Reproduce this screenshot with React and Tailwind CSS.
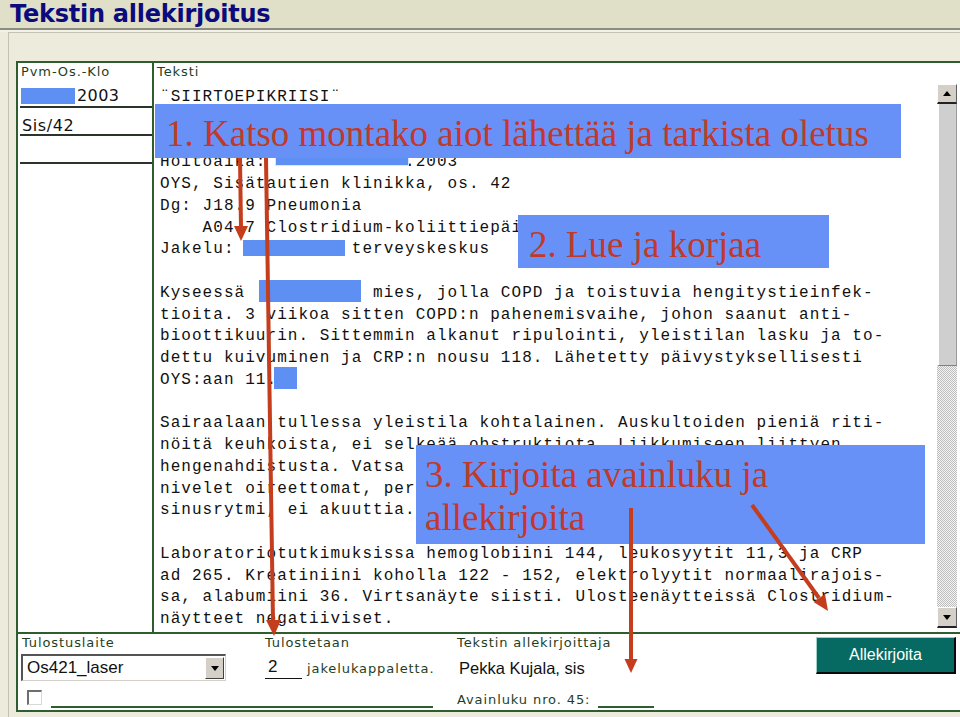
import React from "react";

const LINES = [
  "¨SIIRTOEPIKRIISI¨",
  "",
  "",
  "Hoitoaika:             .2003",
  "OYS, Sisätautien klinikka, os. 42",
  "Dg: J18.9 Pneumonia",
  "    A04.7 Clostridium-koliittiepäily",
  "Jakelu:           terveyskeskus",
  "",
  "Kyseessä '          mies, jolla COPD ja toistuvia hengitystieinfek-",
  "tioita. 3 viikoa sitten COPD:n pahenemisvaihe, johon saanut anti-",
  "bioottikuurin. Sittemmin alkanut ripulointi, yleistilan lasku ja to-",
  "dettu kuivuminen ja CRP:n nousu 118. Lähetetty päivystyksellisesti",
  "OYS:aan 11.",
  "",
  "Sairaalaan tullessa yleistila kohtalainen. Auskultoiden pieniä riti-",
  "nöitä keuhkoista, ei selkeää obstruktiota. Liikkumiseen liittyen",
  "hengenahdistusta. Vatsa pehmeä ja aristamaton.",
  "nivelet oireettomat, perifeeriset pulssit tuntuvat.",
  "sinusrytmi, ei akuuttia.",
  "",
  "Laboratoriotutkimuksissa hemoglobiini 144, leukosyytit 11,3 ja CRP",
  "ad 265. Kreatiniini koholla 122 - 152, elektrolyytit normaalirajois-",
  "sa, alabumiini 36. Virtsanäyte siisti. Ulosteenäytteissä Clostridium-",
  "näytteet negatiiviset.",
];

const BOXES = {
  3: "left-[115px] top-[-1px] w-[134px] h-[15px] border border-[#dce6fb]",
  7: "left-[83px] top-[1px] w-[102px] h-[16px]",
  9: "left-[99px] top-[-3px] w-[102px] h-[22px]",
  13: "left-[114px] top-[-3px] w-[23px] h-[22px]",
};

const label =
  "font-['DejaVu_Sans',sans-serif] text-[13px] tracking-[0.9px] text-[#1e3f1e] leading-[18px]";

function Tri({ up }) {
  return (
    <svg width="8" height="5" viewBox="0 0 8 5">
      <polygon points={up ? "0,5 8,5 4,0" : "0,0 8,0 4,5"} fill="#000" />
    </svg>
  );
}

function Scrollbar() {
  return (
    <div className="w-[20px] h-[544px] flex flex-col mr-[3px]">
      <div className="h-[20px] bg-[#d4d0c8] border-t border-l border-t-white border-l-white border-b-2 border-r border-b-[#222] border-r-[#606060] flex items-center justify-center">
        <Tri up />
      </div>
      <div className="h-[262px] bg-[#cfcfcf] border-l-2 border-l-white border-r border-r-[#9a9a9a] border-b border-b-[#808080]" />
      <div className="flex-1 bg-[repeating-conic-gradient(#bdbdbd_0_25%,#f4f4f4_0_50%)] bg-[length:2px_2px]" />
      <div className="h-[21px] bg-[#d4d0c8] border-t border-l border-t-white border-l-white border-b-2 border-r border-b-[#222] border-r-[#606060] flex items-center justify-center">
        <Tri />
      </div>
    </div>
  );
}

export default function App() {
  return (
    <div className="relative w-[960px] h-[717px] overflow-hidden bg-[#ecebdc]">
      {/* header */}
      <div className="h-[28px] bg-[#e0dfc8] pl-[10px]">
        <span className="font-['DejaVu_Sans',sans-serif] font-bold text-[24px] tracking-[-0.25px] leading-[28px] text-[#0b0b7c] whitespace-nowrap">
          Tekstin allekirjoitus
        </span>
      </div>
      <div className="h-[2px] bg-[#8e8e80]" />
      <div className="h-[2px] bg-[#f3f2e8]" />

      {/* panel */}
      <div className="ml-[8px] border-l border-t border-[#c4c3b3] pl-[7px] pt-[28px] h-[685px]">
        <div className="w-[946px] h-[651px] bg-white border-2 border-[#2f5d2f] flex flex-col">
          {/* top section */}
          <div className="h-[569px] flex">
            {/* left column */}
            <div className="w-[136px] border-r-2 border-[#2f5d2f] flex flex-col">
              <div className={`h-[21px] pl-[3px] ${label}`}>Pvm-Os.-Klo</div>
              <div className="h-[24px] ml-[2px] border-b-2 border-[#2a342a] flex items-center pt-[2px]">
                <span className="ml-[1px] w-[54px] h-[16px] bg-[#5e8ff3] inline-block" />
                <span className="ml-[2px] font-['DejaVu_Sans',sans-serif] text-[16px] tracking-[0.4px] leading-[16px] text-[#111]">
                  2003
                </span>
              </div>
              <div className="h-[28px] ml-[2px] border-b-2 border-[#2a342a] pl-[2px] pt-[5px]">
                <span className="font-['DejaVu_Sans',sans-serif] text-[16px] tracking-[0.6px] leading-[16px] text-[#111]">
                  Sis/42
                </span>
              </div>
              <div className="h-[28px] ml-[2px] border-b-2 border-[#2a342a]" />
            </div>

            {/* text column */}
            <div className="flex-1 flex flex-col">
              <div className={`h-[21px] pl-[3px] ${label}`}>Teksti</div>
              <div className="flex-1 flex">
                <div className="flex-1 pl-[6px] pt-[3px] font-['Liberation_Mono',monospace] text-[16px] tracking-[1.05px] leading-[21.75px] text-[#111]">
                  {LINES.map((t, i) => (
                    <div key={i} className="relative h-[21.75px] whitespace-pre">
                      {t}
                      {BOXES[i] && (
                        <span className={`absolute bg-[#5e8ff3] ${BOXES[i]}`} />
                      )}
                    </div>
                  ))}
                </div>
                <Scrollbar />
              </div>
            </div>
          </div>

          {/* bottom section */}
          <div className="h-[78px] border-t-2 border-[#2f5d2f] flex">
            {/* part A */}
            <div className="w-[439px] flex flex-col">
              <div className="h-[18px] flex">
                <div className={`w-[247px] pl-[4px] ${label}`}>Tulostuslaite</div>
                <div className={label}>Tulostetaan</div>
              </div>
              <div className="h-[32px] flex items-start">
                <div className="ml-[3px] mt-[2px] w-[205px] h-[27px] flex items-center bg-white border-t-2 border-l-2 border-t-[#555] border-l-[#555] border-b border-r border-b-[#d4d0c8] border-r-[#d4d0c8]">
                  <span className="flex-1 pl-[4px] font-['Liberation_Sans',sans-serif] text-[17px] leading-[20px] text-[#111]">
                    Os421_laser
                  </span>
                  <div className="w-[19px] h-[22px] mr-[1px] bg-[#d4d0c8] border-t border-l border-t-white border-l-white border-b border-r border-b-[#404040] border-r-[#404040] flex items-center justify-center">
                    <Tri />
                  </div>
                </div>
                <div className="ml-[39px] mt-[5px] w-[37px] h-[22px] border-b border-[#111] pl-[3px] font-['Liberation_Sans',sans-serif] text-[17px] leading-[20px] text-[#111]">
                  2
                </div>
                <div className={`ml-[5px] mt-[8px] ${label}`}>jakelukappaletta.</div>
              </div>
              <div className="h-[26px] flex items-start">
                <div className="ml-[9px] mt-[6px] w-[15px] h-[15px] bg-white border-t-2 border-l-2 border-t-[#6e6e6e] border-l-[#6e6e6e] border-b border-r border-b-[#d8d8d8] border-r-[#d8d8d8]" />
                <div className="ml-[9px] mt-[22px] w-[382px] h-[2px] bg-[#2f5d2f]" />
              </div>
            </div>

            {/* part B */}
            <div className="w-[359px] flex flex-col">
              <div className={`h-[18px] ${label}`}>Tekstin allekirjoittaja</div>
              <div className="h-[32px] flex items-center pl-[2px] font-['Liberation_Sans',sans-serif] text-[16.5px] text-[#111]">
                Pekka Kujala, sis
              </div>
              <div className="h-[26px] flex items-start">
                <div className={`mt-[7px] ${label}`}>Avainluku nro. 45:</div>
                <div className="ml-[8px] mt-[22px] w-[56px] h-[2px] bg-[#2f5d2f]" />
              </div>
            </div>

            {/* part C */}
            <div className="w-[140px] h-[37px] mt-[3px] bg-[#066a62] border-t border-l border-t-[#9fd0c8] border-l-[#9fd0c8] border-b-2 border-r-2 border-b-[#0a0a0a] border-r-[#0a0a0a] flex items-center justify-center font-['Liberation_Sans',sans-serif] text-[16px] text-white">
              Allekirjoita
            </div>
          </div>
        </div>
      </div>

      {/* callouts */}
      <div className="absolute left-[155px] top-[104px] w-[746px] h-[54px] bg-[#6791f7] pl-[11px] pt-[8px] font-['Liberation_Serif',serif] text-[37px] leading-[43px] text-[#c0392b] whitespace-nowrap">
        1. Katso montako aiot lähettää ja tarkista oletus
      </div>
      <div className="absolute left-[518px] top-[215px] w-[311px] h-[53px] bg-[#6791f7] pl-[11px] pt-[8px] font-['Liberation_Serif',serif] text-[37px] leading-[43px] text-[#c0392b] whitespace-nowrap">
        2. Lue ja korjaa
      </div>
      <div className="absolute left-[416px] top-[445px] w-[509px] h-[99px] bg-[#6791f7] pl-[9px] pt-[8px] font-['Liberation_Serif',serif] text-[37px] leading-[43px] text-[#c0392b]">
        <div>3. Kirjoita avainluku ja</div>
        <div>allekirjoita</div>
      </div>

      {/* arrows */}
      <svg
        className="absolute left-0 top-0 pointer-events-none"
        width="960"
        height="717"
        viewBox="0 0 960 717"
      >
        <g stroke="#c43d1d" strokeWidth="4" fill="#c43d1d">
          <line x1="240" y1="158" x2="241" y2="228" />
          <polygon points="234,226 248,226 241,241" stroke="none" />
          <line x1="266" y1="158" x2="273" y2="622" />
          <polygon points="266,620 281,620 274,636" stroke="none" />
          <line x1="631" y1="508" x2="631" y2="661" />
          <polygon points="624.5,659 637.5,659 631,673" stroke="none" />
          <line x1="752" y1="505" x2="819" y2="598" />
          <polygon points="825,594 813.5,602 828,611" stroke="none" />
        </g>
      </svg>
    </div>
  );
}
